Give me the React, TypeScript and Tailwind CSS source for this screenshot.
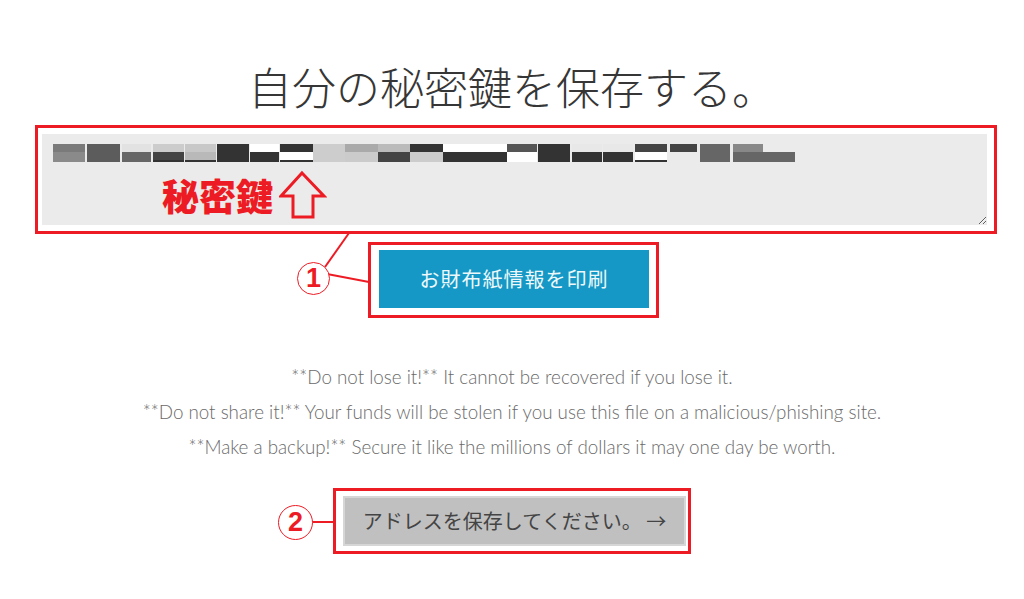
const RED = "#ed1c24";

// pixelated (obscured) private key: [x, width, top colour, bottom colour]
const MOSAIC: [number, number, string, string][] = [
  [0, 32, "#7a7a7a", "#8a8a8a"],
  [34, 33, "#5c5c5c", "#5c5c5c"],
  [69, 29, "#e2e2e2", "#666666"],
  [100, 31, "#cccccc", "#444444"],
  [132, 31, "#c8c8c8", "#b9b9b9"],
  [164, 32, "#333333", "#333333"],
  [197, 29, "#ffffff", "#333333"],
  [227, 33, "#333333", "#ffffff"],
  [260, 32, "#cdcdcd", "#cdcdcd"],
  [292, 33, "#aaaaaa", "#cbcbcb"],
  [325, 32, "#bbbbbb", "#444444"],
  [357, 33, "#333333", "#cccccc"],
  [390, 32, "#ffffff", "#333333"],
  [422, 32, "#ffffff", "#333333"],
  [454, 30, "#555555", "#ffffff"],
  [485, 32, "#333333", "#333333"],
  [519, 30, "#e8e8e8", "#333333"],
  [550, 30, "#e8e8e8", "#333333"],
  [582, 32, "#444444", "#ffffff"],
  [617, 27, "#444444", "#ebebeb"],
  [647, 30, "#666666", "#666666"],
  [680, 30, "#888888", "#666666"],
  [710, 32, "#ebebeb", "#666666"],
];

const BOTTOM_LINE: [number, number][] = [
  [100, 31],
  [132, 31],
  [227, 33],
  [519, 30],
  [582, 32],
];

function Mosaic() {
  return (
    <svg width="745" height="21" viewBox="0 0 745 21" className="absolute left-[11px] top-[9px]">
      {MOSAIC.map(([x, w, top, bottom]) => (
        <g key={x}>
          <rect x={x} y={1} width={w} height={8} fill={top} />
          <rect x={x} y={9} width={w} height={10} fill={bottom} />
        </g>
      ))}
      {BOTTOM_LINE.map(([x, w]) => (
        <rect key={x} x={x} y={17} width={w} height={2} fill="#333333" />
      ))}
    </svg>
  );
}

function UpArrow() {
  return (
    <svg width="48" height="50" viewBox="0 0 48 50" className="shrink-0">
      <polygon
        points="23,3 45,26 34,26 34,47 14,47 14,26 2,26"
        fill="none"
        stroke={RED}
        strokeWidth="3"
      />
    </svg>
  );
}

function Marker({ n, className }: { n: string; className: string }) {
  return (
    <div
      className={`absolute flex items-center justify-center rounded-full border-[1.5px] border-[#ed1c24] bg-white text-[#ed1c24] font-bold text-[27px] leading-none ${className}`}
      style={{ fontFamily: "'Liberation Sans', Arial, sans-serif" }}
    >
      {n}
    </div>
  );
}

export default function App() {
  return (
    <div
      className="relative w-[1024px] h-[599px] overflow-hidden bg-white flex flex-col items-center"
      style={{ fontFamily: "'Noto Sans CJK JP', 'Noto Sans', sans-serif" }}
    >
      {/* Title */}
      <h1 className="mt-[60px] text-[44px] leading-[52px] font-light text-[#363636]">
        自分の秘密鍵を保存する。
      </h1>

      {/* Private key field */}
      <div className="ml-[8px] mt-[13px] w-[962px] h-[109px] border-[3px] border-[#ed1c24] pl-[4px] pr-[7px] pt-[6px] pb-[6px]">
        <div className="relative h-full">
          <textarea
            readOnly
            className="block w-full h-full bg-[#ebebeb] outline-none"
            defaultValue=""
          />
          <Mosaic />
          {/* annotation over the field */}
          <div className="absolute left-[120px] top-[36px] flex items-center gap-[6px]">
            <span className="text-[37px] leading-none font-black text-[#ed1c24]">秘密鍵</span>
            <UpArrow />
          </div>
        </div>
      </div>

      {/* Print paper wallet */}
      <div className="ml-[3px] mt-[8px] w-[291px] h-[76px] border-[3px] border-[#ed1c24] pl-[8px] pr-[7px] pt-[5px] pb-[7px]">
        <button className="w-full h-full bg-[#1598c5] text-[#eef8fb] text-[20px] tracking-[1px]">
          お財布紙情報を印刷
        </button>
      </div>

      {/* Warnings */}
      <div
        className="mt-[41px] text-center text-[18.8px] leading-[35px] font-light text-[#6a6a6a]"
        style={{ fontFamily: "Lato, 'Open Sans', sans-serif" }}
      >
        <p>**Do not lose it!** It cannot be recovered if you lose it.</p>
        <p>**Do not share it!** Your funds will be stolen if you use this file on a malicious/phishing site.</p>
        <p>**Make a backup!** Secure it like the millions of dollars it may one day be worth.</p>
      </div>

      {/* Save address */}
      <div className="mt-[24px] w-[358px] h-[66px] border-[3px] border-[#ed1c24] pl-[7px] pr-[2px] pt-[5px] pb-[5px]">
        <button className="w-full h-full bg-[#c0c0c0] border-2 border-[#d6d6d6] text-[#444444] text-[20px]">
          アドレスを保存してください。 →
        </button>
      </div>

      {/* Annotation leader lines */}
      <svg width="1024" height="599" className="absolute inset-0 pointer-events-none">
        <line x1="349" y1="233" x2="325" y2="267" stroke={RED} strokeWidth="2" />
        <line x1="327" y1="274" x2="369" y2="282" stroke={RED} strokeWidth="2" />
        <line x1="311" y1="522" x2="334" y2="522" stroke={RED} strokeWidth="2" />
      </svg>
      <Marker n="1" className="left-[297px] top-[262px] w-[33px] h-[33px]" />
      <Marker n="2" className="left-[278px] top-[505px] w-[35px] h-[35px]" />
    </div>
  );
}
